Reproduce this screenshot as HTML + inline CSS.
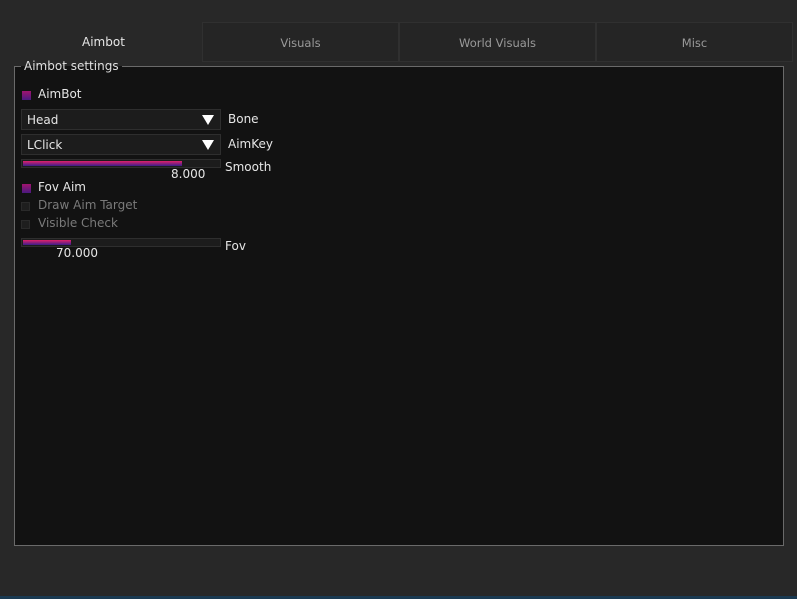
<!DOCTYPE html>
<html><head><meta charset="utf-8"><style>
*{margin:0;padding:0;box-sizing:border-box}
body{width:797px;height:599px;background:#282828;position:relative;overflow:hidden;font-family:"DejaVu Sans","Liberation Sans",sans-serif;font-size:12px;color:#e6e6e6}
.a{position:absolute}
.tab{position:absolute;top:22px;height:40px;background:#252525;border:1px solid #303030;color:#9a9a9a;text-align:center;line-height:41px;font-size:11.5px}
.panel{left:14px;top:66px;width:770px;height:480px;background:#121212;border:1px solid #6a6a6a}
.leg{left:21px;top:59px;padding:0 3px;color:#e0e0e0;background:linear-gradient(#282828 50%,#121212 50%)}
.cb{width:9px;height:9px;background:linear-gradient(#a0146e,#4a1a80)}
.cb.off{background:#1e1e1e;border:1px solid #2a2a2a}
.combo{left:21px;width:200px;height:21px;background:#1c1c1c;border:1px solid #2e2e2e;padding-left:5px;line-height:20px}
.combo:after{content:"";position:absolute;right:6px;top:5px;border-left:6px solid transparent;border-right:6px solid transparent;border-top:10px solid #fff}
.sl{left:21px;width:200px;height:9px;background:#1c1c1c;border:1px solid #2e2e2e}
.fill{position:absolute;left:1px;top:1px;height:5px;background:linear-gradient(#e0206a,#3a1e8a)}
.dim{color:#7a7a7a}
</style></head><body>
<div class="a" style="left:0;top:596px;width:797px;height:3px;background:#1a3a52"></div>
<div class="a" style="left:82px;top:35px;color:#e6e6e6">Aimbot</div>
<div class="tab" style="left:202px;width:197px">Visuals</div>
<div class="tab" style="left:399px;width:197px">World Visuals</div>
<div class="tab" style="left:596px;width:197px">Misc</div>
<div class="a panel"></div>
<div class="a leg">Aimbot settings</div>
<div class="a cb" style="left:22px;top:91px"></div><div class="a" style="left:38px;top:87px">AimBot</div>
<div class="a combo" style="top:109px">Head</div><div class="a" style="left:228px;top:112px">Bone</div>
<div class="a combo" style="top:134px">LClick</div><div class="a" style="left:228px;top:137px">AimKey</div>
<div class="a sl" style="top:159px"><div class="fill" style="width:159px"></div></div>
<div class="a" style="left:225px;top:160px">Smooth</div>
<div class="a" style="left:171px;top:167px">8.000</div>
<div class="a cb" style="left:22px;top:184px"></div><div class="a" style="left:38px;top:180px">Fov Aim</div>
<div class="a cb off" style="left:21px;top:202px"></div><div class="a dim" style="left:38px;top:198px">Draw Aim Target</div>
<div class="a cb off" style="left:21px;top:220px"></div><div class="a dim" style="left:38px;top:216px">Visible Check</div>
<div class="a sl" style="top:238px"><div class="fill" style="width:48px"></div></div>
<div class="a" style="left:225px;top:239px">Fov</div>
<div class="a" style="left:56px;top:246px">70.000</div>
</body></html>
